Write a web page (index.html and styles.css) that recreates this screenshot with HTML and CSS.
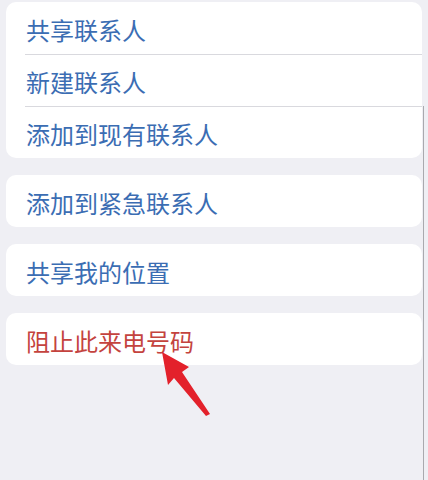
FILE: index.html
```html
<!DOCTYPE html>
<html lang="zh-CN">
<head>
    <meta charset="UTF-8">
    <meta name="viewport" content="width=device-width, initial-scale=1.0">
    <title>联系人操作</title>
    <link rel="stylesheet" href="styles.css">
</head>
<body>
    <div class="container">
        <div class="card">
            <div class="row"><div class="item">共享联系人</div></div>
            <div class="row"><div class="item">新建联系人</div></div>
            <div class="row"><div class="item">添加到现有联系人</div></div>
        </div>
        <div class="card">
            <div class="row"><div class="item">添加到紧急联系人</div></div>
        </div>
        <div class="card">
            <div class="row"><div class="item">共享我的位置</div></div>
        </div>
        <div class="card">
            <div class="row"><div class="item danger">阻止此来电号码</div></div>
        </div>
    </div>
    <div class="edge"></div>
    <svg class="arrow" width="428" height="480" viewBox="0 0 428 480">
        <polygon points="162,352 189,367 182,372 210,414 206,416 174,378 168,385" fill="#e3212b"/>
    </svg>
</body>
</html>
```

FILE: styles.css
```css
body {
    margin: 0;
    padding: 0;
    background-color: #efeff4;
    font-family: "Noto Sans CJK SC", "Noto Sans", sans-serif;
}

.container {
    display: flex;
    flex-direction: column;
    gap: 17px;
    padding: 2px 6px 0 6px;
}

.card {
    background-color: #fff;
    border-radius: 10px;
    overflow: hidden;
}

.row {
    padding-left: 19px;
}

.item {
    height: 52px;
    display: flex;
    align-items: center;
    padding-left: 1px;
    padding-top: 2px;
    box-sizing: border-box;
    font-size: 24px;
    color: #3b6db3;
}

.row + .row .item {
    border-top: 1px solid #d9d9de;
}

.danger {
    color: #c4433e;
}

.edge {
    position: absolute;
    left: 423px;
    top: 106px;
    width: 1px;
    height: 374px;
    background-color: #a9a9ae;
}

.arrow {
    position: absolute;
    left: 0;
    top: 0;
}
```
